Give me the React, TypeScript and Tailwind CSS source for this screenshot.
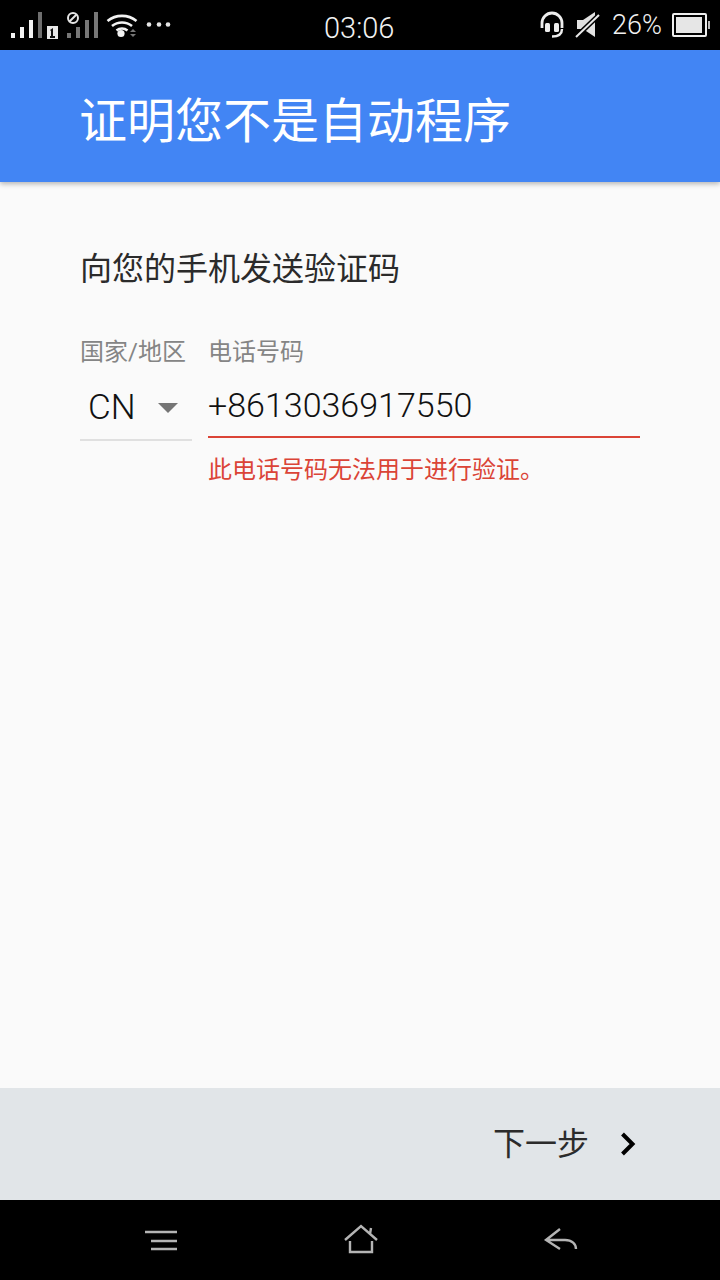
import { FC } from "react";

const FONT = "font-['Roboto','Noto_Sans_CJK_SC',sans-serif]";

const StatusLeft: FC = () => (
  <svg width="180" height="50" viewBox="0 0 180 50" className="block">
    {/* sim 1 bars */}
    <rect x="11" y="33" width="4" height="5" fill="#f2f2f2" />
    <rect x="20" y="27" width="4" height="11" fill="#f2f2f2" />
    <rect x="29" y="20" width="4" height="18" fill="#f2f2f2" />
    <rect x="38" y="12" width="4" height="26" fill="#6e6e6e" />
    <rect x="47" y="26" width="11" height="13" fill="#e8e8e8" />
    <path d="M50 30 L53 28 V36 H55 V38 H50 V36 H51 V31 Z" fill="#111" />
    {/* sim 2 */}
    <circle cx="73" cy="18" r="5" fill="none" stroke="#e5e5e5" strokeWidth="2" />
    <path d="M69.5 21.5 L76.5 14.5" stroke="#e5e5e5" strokeWidth="2" />
    <rect x="67" y="33" width="4" height="5" fill="#777" />
    <rect x="76" y="27" width="4" height="11" fill="#777" />
    <rect x="85" y="20" width="4" height="18" fill="#777" />
    <rect x="94" y="12" width="4" height="26" fill="#777" />
    {/* wifi */}
    <path d="M107.5 21 A23 23 0 0 1 136.5 21" fill="none" stroke="#f2f2f2" strokeWidth="2.6" />
    <path d="M112 26 A16 16 0 0 1 132 26" fill="none" stroke="#f2f2f2" strokeWidth="2.6" />
    <path d="M116.5 30.5 A9 9 0 0 1 127.5 30.5" fill="none" stroke="#f2f2f2" strokeWidth="2.6" />
    <circle cx="121" cy="33.5" r="3.6" fill="#f2f2f2" />
    <path d="M130 32 L133 29 L136 32 Z" fill="#777" />
    <path d="M130 34 L136 34 L133 37 Z" fill="#777" />
    {/* dots */}
    <circle cx="149" cy="24.5" r="2.3" fill="#e5e5e5" />
    <circle cx="159" cy="24.5" r="2.3" fill="#e5e5e5" />
    <circle cx="168" cy="24.5" r="2.3" fill="#e5e5e5" />
  </svg>
);

const StatusRight: FC = () => (
  <div className="flex items-center">
    <svg width="24" height="28" viewBox="0 0 24 28" className="block">
      <path d="M2 17 V12 A10 10 0 0 1 22 12 V17" fill="none" stroke="#eee" strokeWidth="2.8" />
      <rect x="5" y="12" width="5" height="9" rx="1.5" fill="#eee" />
      <rect x="14" y="12" width="5" height="9" rx="1.5" fill="#eee" />
      <path d="M22 18 C22 23 18 25.5 12 25.5" fill="none" stroke="#eee" strokeWidth="2.4" />
    </svg>
    <svg width="26" height="28" viewBox="0 0 26 28" className="ml-[11px] block">
      <path d="M2 9 H8 L20 1 V26 L8 18 H2 Z" fill="#e2e2e2" />
      <path d="M0 27 L25 3" stroke="#000" strokeWidth="5" />
      <path d="M1 26 L24 4" stroke="#e8e8e8" strokeWidth="2" />
    </svg>
    <span className="ml-[11px] text-[27px] font-light leading-none text-[#f2f2f2]">26%</span>
    <div className="ml-[10px] flex items-center">
      <div className="h-[24px] w-[35px] rounded-[2px] border-2 border-[#eee] p-[2px]">
        <div className="h-full w-[26px] bg-[#e6e6e6]" />
      </div>
      <div className="ml-[1px] h-[8px] w-[2px] bg-[#bbb]" />
    </div>
  </div>
);

const App: FC = () => {
  return (
    <div className={`flex h-[1280px] w-[720px] flex-col bg-[#fafafa] ${FONT}`}>
      <header className="relative flex h-[50px] shrink-0 items-center justify-between bg-black pr-[10px]">
        <StatusLeft />
        <span className="absolute left-[324px] top-[11px] text-[29px] font-light leading-[34px] text-[#f2f2f2]">
          03:06
        </span>
        <StatusRight />
      </header>

      <div className="flex h-[132px] shrink-0 items-center bg-[#4285f4] pl-[79px] pt-[12px] shadow-[0_2px_5px_rgba(0,0,0,0.28)]">
        <h1 className="text-[48px] leading-none text-white">证明您不是自动程序</h1>
      </div>

      <main className="flex-1 pl-[80px] pr-[80px] pt-[68px]">
        <p className="text-[32px] leading-[38px] text-[#2b2b2b]">向您的手机发送验证码</p>

        <div className="mt-[48px] flex">
          <div className="w-[112px]">
            <label className="block whitespace-nowrap text-[24px] leading-[32px] text-[#858585]">
              国家/地区
            </label>
            <div className="mt-[7px] flex h-[66px] items-center border-b-2 border-[#e0e0e0] pl-[8px]">
              <span className="text-[35px] font-light leading-none text-[#111]">CN</span>
              <svg width="20" height="12" viewBox="0 0 20 12" className="ml-[22px] mt-[1px] block">
                <path d="M0 1 H20 L10 11 Z" fill="#757575" />
              </svg>
            </div>
          </div>

          <div className="ml-[16px] flex-1">
            <label className="block text-[24px] leading-[32px] text-[#858585]">电话号码</label>
            <div className="mt-[6px] flex h-[64px] items-center border-b-2 border-[#db4437]">
              <span className="text-[34px] font-light leading-none text-[#111]">+8613036917550</span>
            </div>
            <p className="mt-[16px] text-[24px] leading-[32px] text-[#db4437]">
              此电话号码无法用于进行验证。
            </p>
          </div>
        </div>
      </main>

      <div className="flex h-[112px] shrink-0 items-center justify-end bg-[#e1e5e8] pr-[83px]">
        <span className="text-[32px] leading-none text-[#2b2b2b]">下一步</span>
        <svg width="18" height="26" viewBox="0 0 18 26" className="ml-[30px] block">
          <path d="M3.5 3 L13.5 13 L3.5 23" fill="none" stroke="#000" strokeWidth="4" />
        </svg>
      </div>

      <nav className="flex h-[80px] shrink-0 items-center bg-black">
        <svg width="720" height="80" viewBox="0 0 720 80" className="block">
          <g fill="none" stroke="#b4b4b4" strokeWidth="2.4">
            <path d="M145 32 H177 M151 41 H177 M151 49 H177" />
            <path d="M345 40 L361 26 L377 40 M350 41 V52 H372 V41 M371 28 L370 34" />
            <path d="M560 29 L546 40 L560 49 M546 40 H565 C572 40 576 44 576 49" />
          </g>
        </svg>
      </nav>
    </div>
  );
};

export default App;
